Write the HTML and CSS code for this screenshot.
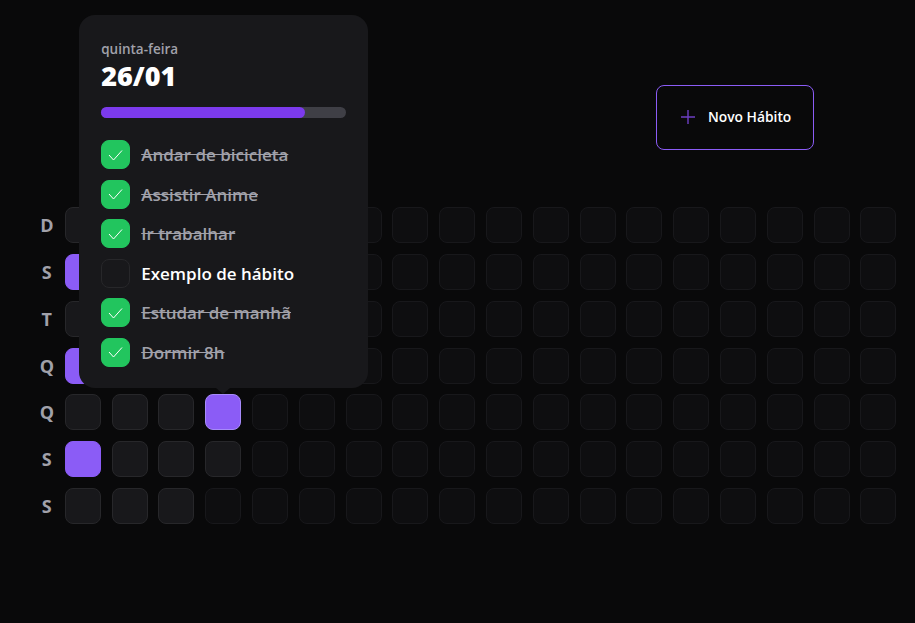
FILE: index.html
```html
<!DOCTYPE html>
<html lang="pt-BR">
<head>
    <meta charset="UTF-8">
    <title>Habits</title>
    <link rel="stylesheet" href="styles.css">
</head>
<body>

    <header class="header">
        <button class="new-habit">
            <svg class="plus" viewBox="0 0 16 16" width="16" height="16"><path d="M8 1v14M1 8h14"/></svg>
            Novo Hábito
        </button>
    </header>

    <main class="summary">
        <div class="weekdays">
            <div>D</div>
            <div>S</div>
            <div>T</div>
            <div>Q</div>
            <div>Q</div>
            <div>S</div>
            <div>S</div>
        </div>

        <div class="days">
            <!-- semana 1 -->
            <div class="day past"></div>
            <div class="day done"></div>
            <div class="day past"></div>
            <div class="day done"></div>
            <div class="day past"></div>
            <div class="day done"></div>
            <div class="day past"></div>
            <!-- semana 2 -->
            <div class="day past"></div>
            <div class="day past"></div>
            <div class="day past"></div>
            <div class="day past"></div>
            <div class="day past"></div>
            <div class="day past"></div>
            <div class="day past"></div>
            <!-- semana 3 -->
            <div class="day past"></div>
            <div class="day past"></div>
            <div class="day past"></div>
            <div class="day past"></div>
            <div class="day past"></div>
            <div class="day past"></div>
            <div class="day past"></div>
            <!-- semana 4 -->
            <div class="day past"></div>
            <div class="day past"></div>
            <div class="day past"></div>
            <div class="day past"></div>
            <div class="day done open">
                <div class="popover">
                    <span class="weekday-name">quinta-feira</span>
                    <strong class="date">26/01</strong>
                    <div class="progress"><div class="progress-bar" style="width: 83%"></div></div>
                    <ul class="habits">
                        <li class="habit checked"><span class="box"><svg viewBox="0 0 20 20" width="20" height="20"><path d="M3 10l4.5 5L16 5.5"/></svg></span>Andar de bicicleta</li>
                        <li class="habit checked"><span class="box"><svg viewBox="0 0 20 20" width="20" height="20"><path d="M3 10l4.5 5L16 5.5"/></svg></span>Assistir Anime</li>
                        <li class="habit checked"><span class="box"><svg viewBox="0 0 20 20" width="20" height="20"><path d="M3 10l4.5 5L16 5.5"/></svg></span>Ir trabalhar</li>
                        <li class="habit"><span class="box"></span>Exemplo de hábito</li>
                        <li class="habit checked"><span class="box"><svg viewBox="0 0 20 20" width="20" height="20"><path d="M3 10l4.5 5L16 5.5"/></svg></span>Estudar de manhã</li>
                        <li class="habit checked"><span class="box"><svg viewBox="0 0 20 20" width="20" height="20"><path d="M3 10l4.5 5L16 5.5"/></svg></span>Dormir 8h</li>
                    </ul>
                    <div class="arrow"></div>
                </div>
            </div>
            <div class="day past"></div>
            <script>
                // dias que ainda nao chegaram
                for (let i = 0; i < 99; i++) {
                    document.write('<div class="day"></div>');
                }
            </script>
        </div>
    </main>

</body>
</html>
```

FILE: styles.css
```css
* {
    box-sizing: border-box;
}
body {
    margin: 0;
    height: 623px;
    overflow: hidden;
    background-color: #09090a;
    color: #ffffff;
    font-family: "Open Sans", "Noto Sans", sans-serif;
}
.header {
    display: flex;
    justify-content: flex-end;
    padding: 85px 101px 0 0;
}
.new-habit {
    display: flex;
    align-items: center;
    gap: 12px;
    width: 158px;
    height: 65px;
    padding: 0 0 2px 23px;
    background: transparent;
    border: 1px solid #8b5cf6;
    border-radius: 8px;
    color: #ffffff;
    font: 600 13.8px "Open Sans", sans-serif;
    cursor: pointer;
}
.plus {
    flex: none;
    fill: none;
    stroke: #6d3fc4;
    stroke-width: 1.4;
}
.summary {
    display: flex;
    padding: 57.2px 0 0 28.8px;
}
.weekdays {
    display: grid;
    grid-template-rows: repeat(7, 36px);
    row-gap: 10.8px;
    width: 36px;
    color: #a1a1aa;
    font-size: 18px;
    font-weight: 700;
}
.weekdays div {
    display: flex;
    align-items: center;
    justify-content: center;
}
.days {
    display: grid;
    grid-template-rows: repeat(7, 36px);
    grid-auto-flow: column;
    grid-auto-columns: 36px;
    gap: 10.8px;
}
.day {
    position: relative;
    border: 1px solid #18181b;
    border-radius: 8px;
    background-color: #0e0e10;
}
.day.past {
    border-color: #27272a;
    background-color: #18181b;
}
.day.done {
    border-color: #8b5cf6;
    background-color: #8b5cf6;
}
.day.open {
    border-color: #a78bfa;
}
.popover {
    position: absolute;
    left: -127px;
    bottom: 41px;
    z-index: 5;
    display: flex;
    flex-direction: column;
    width: 289px;
    height: 373px;
    padding: 26px 22px 0;
    border-radius: 16px;
    background-color: #18181b;
}
.arrow {
    position: absolute;
    left: 137px;
    bottom: -6px;
    border-top: 6px solid #18181b;
    border-left: 7px solid transparent;
    border-right: 7px solid transparent;
}
.weekday-name {
    color: #a1a1aa;
    font-size: 13.5px;
    font-weight: 600;
    line-height: 16px;
}
.date {
    margin-top: 4px;
    font-size: 27px;
    font-weight: 800;
    line-height: 30px;
}
.progress {
    flex: none;
    height: 11px;
    margin-top: 16px;
    border-radius: 6px;
    background-color: #3f3f46;
}
.progress-bar {
    height: 100%;
    border-radius: 6px;
    background-color: #7c3aed;
}
.habits {
    display: flex;
    flex-direction: column;
    gap: 10.55px;
    margin: 21.8px 0 0;
    padding: 0;
    list-style: none;
}
.habit {
    display: flex;
    align-items: center;
    gap: 11px;
    height: 29px;
    font-size: 17px;
    font-weight: 600;
}
.habit.checked {
    color: #a1a1aa;
    text-decoration: line-through;
}
.box {
    display: flex;
    align-items: center;
    justify-content: center;
    flex: none;
    width: 29px;
    height: 29px;
    border: 1px solid #27272a;
    border-radius: 8px;
    background-color: #18181b;
}
.checked .box {
    border-color: #22c55e;
    background-color: #22c55e;
}
.box svg {
    fill: none;
    stroke: #ffffff;
    stroke-width: 1;
}
```
